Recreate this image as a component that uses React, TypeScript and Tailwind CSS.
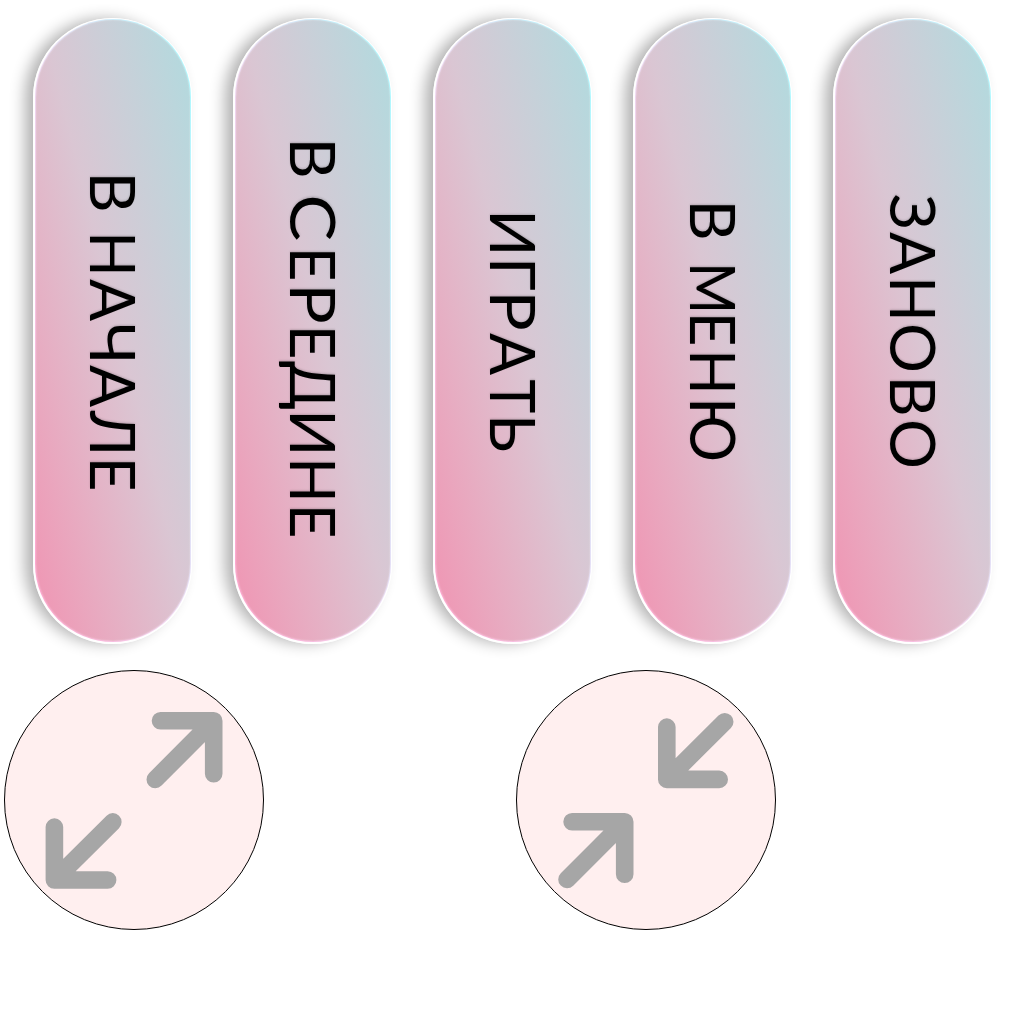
type Glyph = [char: string, pitch: number];

const pills: { label: string; start: string; glyphs: Glyph[] }[] = [
  {
    label: "В НАЧАЛЕ",
    start: "pt-[151.6px]",
    glyphs: [["В", 41], [" ", 17.4], ["Н", 48.9], ["А", 43.7], ["Ч", 42.7], ["А", 45.3], ["Л", 45.1], ["Е", 36]],
  },
  {
    label: "В СЕРЕДИНЕ",
    start: "pt-[118.4px]",
    glyphs: [["В", 41], [" ", 18], ["С", 48.7], ["Е", 39.1], ["Р", 39.3], ["Е", 37], ["Д", 47.4], ["И", 47.2], ["Н", 46.8], ["Е", 36]],
  },
  {
    label: "ИГРАТЬ",
    start: "pt-[188.9px]",
    glyphs: [["И", 48.1], ["Г", 35.3], ["Р", 41], ["А", 44.6], ["Т", 36.6], ["Ь", 38]],
  },
  {
    label: "В МЕНЮ",
    start: "pt-[180.1px]",
    glyphs: [["В", 41], [" ", 17.7], ["М", 52.6], ["Е", 36.4], ["Н", 49], ["Ю", 66]],
  },
  {
    label: "ЗАНОВО",
    start: "pt-[173.5px]",
    glyphs: [["З", 38.2], ["А", 43.5], ["Н", 48.1], ["О", 52.9], ["В", 42.6], ["О", 50]],
  },
];

// Width corrections for letters that are drawn wider or narrower than the typeface's own.
const widths: Record<string, string> = {
  Н: "scale-y-[0.95]",
  И: "scale-y-[0.98]",
  Т: "scale-y-[0.92]",
  М: "scale-y-[0.9]",
  С: "scale-y-[1.12]",
  Р: "scale-y-[1.08]",
  В: "scale-y-[1.02]",
  Е: "scale-y-[0.96]",
};

// Centre of each of those letters inside its box.
const pivots: Record<string, string> = {
  Н: "origin-[50%_24px]",
  И: "origin-[50%_24px]",
  Т: "origin-[50%_18.6px]",
  М: "origin-[50%_29.3px]",
  С: "origin-[50%_21.7px]",
  Р: "origin-[50%_20.7px]",
  В: "origin-[50%_21.6px]",
  Е: "origin-[50%_19.7px]",
};

function Pill({ start, glyphs, label }: { label: string; start: string; glyphs: Glyph[] }) {
  return (
    <button
      aria-label={label}
      className="h-[626px] w-[159px] rounded-full bg-white/80 pt-px pr-px pb-[2px] pl-[2px] shadow-[-9px_0_15px_-1px_rgba(0,0,0,0.31)]"
    >
      <span className="block h-full w-full rounded-full bg-linear-to-tr from-[#ff9fcb] via-[#ecdcf5] to-[#a6fbff] p-px">
        <span
          className={`flex h-full w-full items-start justify-center rounded-full bg-linear-to-tr from-[#f093b2] via-[#dac6d3] via-52% to-[#afdbdf] shadow-[inset_0_0_2px_rgba(255,255,255,0.4)] ${start}`}
        >
          <span className="relative left-[0.5px] text-left font-[Lato,sans-serif] text-[62.5px] leading-[64px] whitespace-pre text-black [text-shadow:-1px_0_2px_rgba(0,0,0,0.18)] [writing-mode:vertical-rl]">
            {glyphs.map(([char, pitch], i) => (
              <span
                key={i}
                className={`inline-block ${widths[char] ?? ""} ${pivots[char] ?? ""}`}
                style={{ height: pitch }}
              >
                {char}
              </span>
            ))}
          </span>
        </span>
      </span>
    </button>
  );
}

function RoundButton({ d, label }: { d: string; label: string }) {
  return (
    <button aria-label={label} className="size-[260px] rounded-full border border-black bg-[#ffefef]">
      <svg viewBox="0 0 258 258" className="size-full" fill="none" stroke="#a6a6a6" strokeWidth="17.6" strokeLinecap="round" strokeLinejoin="round">
        <path d={d} />
      </svg>
    </button>
  );
}

export default function App() {
  return (
    <main className="h-screen w-screen overflow-hidden bg-white">
      <div className="flex gap-[41px] pt-[18px] pl-[33px]">
        {pills.map((pill) => (
          <Pill key={pill.label} {...pill} />
        ))}
      </div>
      <div className="flex gap-[252px] pt-[26px] pl-[4px]">
        <RoundButton
          label="Развернуть"
          d="M155.5 49.8H208.7V102.8M208.7 49.8L150.3 108.4M49.4 156.1V209H102.6M49.4 209L107.8 150.9"
        />
        <RoundButton
          label="Свернуть"
          d="M149.8 56.1V108.4H202.2M149.8 108.4L207.7 50.7M55.1 150.8H107.7V203.2M107.7 150.8L50 208.4"
        />
      </div>
    </main>
  );
}
